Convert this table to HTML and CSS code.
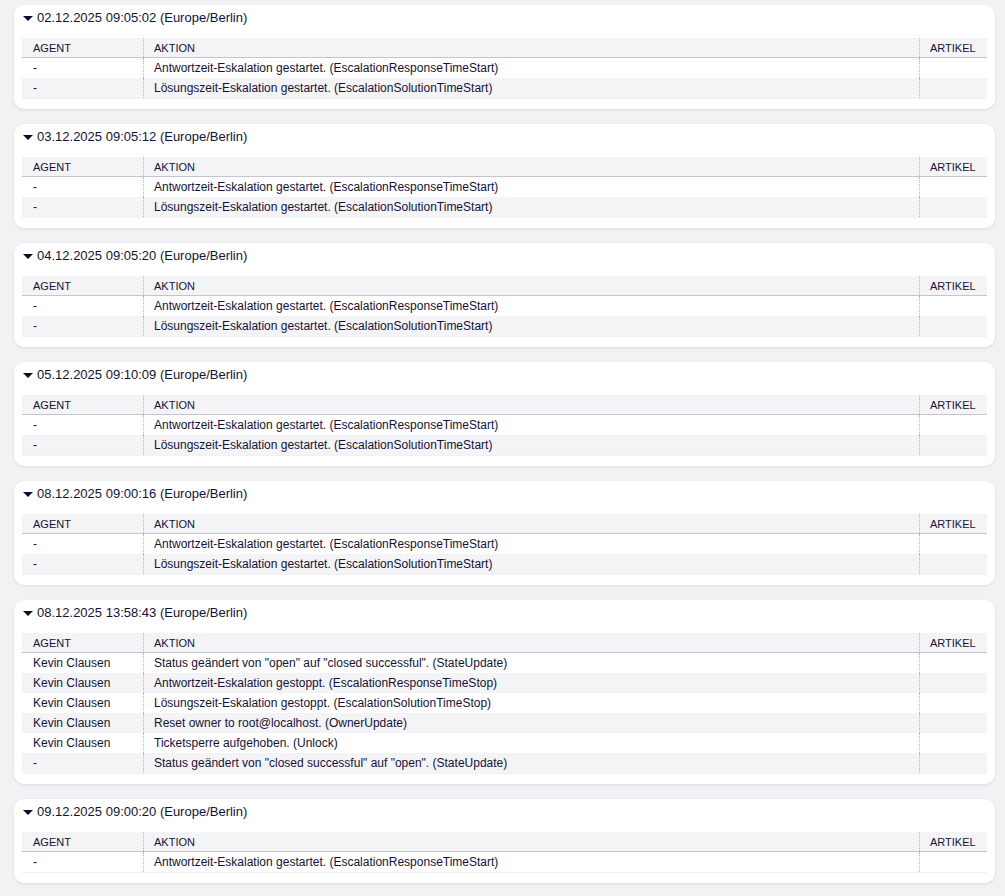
FILE: index.html
```html
<!DOCTYPE html>
<html lang="de">
<head>
<meta charset="utf-8">
<title>Verlauf</title>
<link rel="stylesheet" href="styles.css">
</head>
<body>
<main class="history">

<section class="card">
  <h2 class="card-head"><span class="caret"></span>02.12.2025 09:05:02 (Europe/Berlin)</h2>
  <table class="log">
    <thead><tr><th class="c-agent">Agent</th><th class="c-action">Aktion</th><th class="c-article">Artikel</th></tr></thead>
    <tbody>
      <tr><td>-</td><td>Antwortzeit-Eskalation gestartet. (EscalationResponseTimeStart)</td><td></td></tr>
      <tr><td>-</td><td>Lösungszeit-Eskalation gestartet. (EscalationSolutionTimeStart)</td><td></td></tr>
    </tbody>
  </table>
</section>

<section class="card">
  <h2 class="card-head"><span class="caret"></span>03.12.2025 09:05:12 (Europe/Berlin)</h2>
  <table class="log">
    <thead><tr><th class="c-agent">Agent</th><th class="c-action">Aktion</th><th class="c-article">Artikel</th></tr></thead>
    <tbody>
      <tr><td>-</td><td>Antwortzeit-Eskalation gestartet. (EscalationResponseTimeStart)</td><td></td></tr>
      <tr><td>-</td><td>Lösungszeit-Eskalation gestartet. (EscalationSolutionTimeStart)</td><td></td></tr>
    </tbody>
  </table>
</section>

<section class="card">
  <h2 class="card-head"><span class="caret"></span>04.12.2025 09:05:20 (Europe/Berlin)</h2>
  <table class="log">
    <thead><tr><th class="c-agent">Agent</th><th class="c-action">Aktion</th><th class="c-article">Artikel</th></tr></thead>
    <tbody>
      <tr><td>-</td><td>Antwortzeit-Eskalation gestartet. (EscalationResponseTimeStart)</td><td></td></tr>
      <tr><td>-</td><td>Lösungszeit-Eskalation gestartet. (EscalationSolutionTimeStart)</td><td></td></tr>
    </tbody>
  </table>
</section>

<section class="card">
  <h2 class="card-head"><span class="caret"></span>05.12.2025 09:10:09 (Europe/Berlin)</h2>
  <table class="log">
    <thead><tr><th class="c-agent">Agent</th><th class="c-action">Aktion</th><th class="c-article">Artikel</th></tr></thead>
    <tbody>
      <tr><td>-</td><td>Antwortzeit-Eskalation gestartet. (EscalationResponseTimeStart)</td><td></td></tr>
      <tr><td>-</td><td>Lösungszeit-Eskalation gestartet. (EscalationSolutionTimeStart)</td><td></td></tr>
    </tbody>
  </table>
</section>

<section class="card">
  <h2 class="card-head"><span class="caret"></span>08.12.2025 09:00:16 (Europe/Berlin)</h2>
  <table class="log">
    <thead><tr><th class="c-agent">Agent</th><th class="c-action">Aktion</th><th class="c-article">Artikel</th></tr></thead>
    <tbody>
      <tr><td>-</td><td>Antwortzeit-Eskalation gestartet. (EscalationResponseTimeStart)</td><td></td></tr>
      <tr><td>-</td><td>Lösungszeit-Eskalation gestartet. (EscalationSolutionTimeStart)</td><td></td></tr>
    </tbody>
  </table>
</section>

<section class="card">
  <h2 class="card-head"><span class="caret"></span>08.12.2025 13:58:43 (Europe/Berlin)</h2>
  <table class="log">
    <thead><tr><th class="c-agent">Agent</th><th class="c-action">Aktion</th><th class="c-article">Artikel</th></tr></thead>
    <tbody>
      <tr><td>Kevin Clausen</td><td>Status geändert von "open" auf "closed successful". (StateUpdate)</td><td></td></tr>
      <tr><td>Kevin Clausen</td><td>Antwortzeit-Eskalation gestoppt. (EscalationResponseTimeStop)</td><td></td></tr>
      <tr><td>Kevin Clausen</td><td>Lösungszeit-Eskalation gestoppt. (EscalationSolutionTimeStop)</td><td></td></tr>
      <tr><td>Kevin Clausen</td><td>Reset owner to root@localhost. (OwnerUpdate)</td><td></td></tr>
      <tr><td>Kevin Clausen</td><td>Ticketsperre aufgehoben. (Unlock)</td><td></td></tr>
      <tr><td>-</td><td>Status geändert von "closed successful" auf "open". (StateUpdate)</td><td></td></tr>
    </tbody>
  </table>
</section>

<section class="card">
  <h2 class="card-head"><span class="caret"></span>09.12.2025 09:00:20 (Europe/Berlin)</h2>
  <table class="log">
    <thead><tr><th class="c-agent">Agent</th><th class="c-action">Aktion</th><th class="c-article">Artikel</th></tr></thead>
    <tbody>
      <tr><td>-</td><td>Antwortzeit-Eskalation gestartet. (EscalationResponseTimeStart)</td><td></td></tr>
    </tbody>
  </table>
</section>

</main>
</body>
</html>
```
FILE: styles.css
```css
html, body {
  margin: 0;
  padding: 0;
  background: #f2f2f5;
}

body {
  font-family: "Liberation Sans", Arial, sans-serif;
  color: #12123a;
}

.history {
  display: flex;
  flex-direction: column;
  gap: 15px;
  padding: 5px 10px 20px 14px;
}

.card {
  background: #ffffff;
  border-radius: 10px;
  box-shadow: 0 1px 3px rgba(20, 20, 60, 0.10);
  padding: 5px 8px 10px 8px;
}

.card-head {
  display: flex;
  align-items: center;
  margin: 0 0 12px 0;
  padding-left: 1px;
  height: 16px;
  font-size: 13px;
  font-weight: normal;
  line-height: 16px;
}

.caret {
  width: 0;
  height: 0;
  border-left: 5px solid transparent;
  border-right: 5px solid transparent;
  border-top: 5px solid #0c0c2e;
  margin-right: 4px;
  margin-top: 1px;
}

.log {
  width: 100%;
  border-collapse: collapse;
  font-size: 12px;
  table-layout: fixed;
}

.log th {
  height: 19px;
  padding: 0 11px;
  background: #f4f4f7;
  border-bottom: 1px solid #c6c4ce;
  font-size: 11px;
  font-weight: normal;
  text-transform: uppercase;
  text-align: left;
  vertical-align: middle;
}

.log td {
  height: 20px;
  padding: 0 11px;
  vertical-align: middle;
  white-space: nowrap;
}

.log th + th,
.log td + td {
  border-left: 1px dotted #b4b4be;
  padding-left: 10px;
}

.log tbody tr:nth-child(even) td {
  background: #f4f4f7;
}

.log tbody tr:last-child td {
  border-bottom: 1px solid #f1f1f4;
}

.c-agent { width: 99px; }
.c-article { width: 46px; }
```
